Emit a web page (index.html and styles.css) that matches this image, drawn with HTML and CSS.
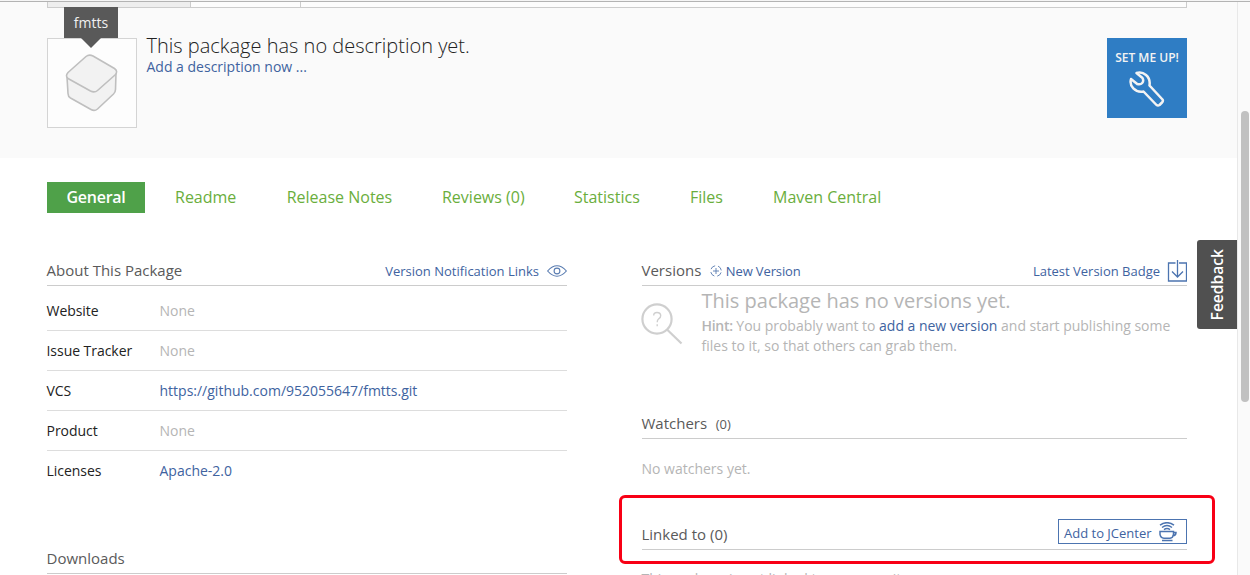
FILE: index.html
```html
<!DOCTYPE html>
<html lang="en">
<head>
<meta charset="utf-8">
<title>fmtts</title>
<link rel="stylesheet" href="styles.css">
</head>
<body>
<div class="window">
  <div class="page">
    <header class="hero">
      <div class="strip"><div class="strip-active"></div><div class="strip-second"></div><div class="strip-rest"></div></div>
      <div class="summary">
        <div class="avatar">
          <svg width="88" height="88" viewBox="0.5 0 88 88" fill="#f2f2f2" stroke="#bfbfbf" stroke-width="1.6" stroke-linejoin="round">
            <path d="M19.500 38L20.500 54.500Q20.500 57.500 23 59L43.500 70.500Q47 72.500 50 70L66 55Q68 53 68 50.500L68.500 34"/>
            <path d="M38.500 17.500Q41.500 15 45.500 17L67 29.500Q71 32.500 67.500 36L50 51.500Q47 54 43 52L20.500 39.500Q17.500 37 20.500 33.500Z"/>
          </svg>
          <div class="tooltip">fmtts</div>
        </div>
        <div class="description">
          <h1 class="title">This package has no description yet.</h1>
          <a class="describe">Add a description now ...</a>
        </div>
        <a class="setup"><span class="setup-label">SET ME UP!</span>
          <svg width="36" height="36" viewBox="0 0 36 36" fill="none" stroke="#f3f3f3" stroke-width="2.500" stroke-linejoin="round" stroke-linecap="round"><path d="M7.500 2C14 0 22 5 20.500 14.500L33.500 28.500Q34.500 30 33 31.500L30.500 34Q29 35 27.500 34L14.500 20.500C6 22 0 15 2 8L8.200 13Q11.500 14 13.200 12Q15 10 13.500 7Z"/></svg>
        </a>
      </div>
    </header>
    <nav class="tabs">
      <a class="tab active">General</a><a class="tab readme">Readme</a><a class="tab notes">Release Notes</a><a class="tab reviews">Reviews (0)</a><a class="tab stats">Statistics</a><a class="tab files">Files</a><a class="tab maven">Maven Central</a>
    </nav>
    <main class="columns">
      <div class="left">
        <section class="about">
          <div class="heading"><h2 class="name about-name">About This Package</h2><a class="action"><span class="links-label">Version Notification Links</span>
            <svg class="eye" width="20" height="12" viewBox="0 0 20 12" fill="none" stroke="#587bb0" stroke-width="1.100"><path d="M.6 6Q10-4.500 19.400 6Q10 16.500.6 6Z"/><circle cx="10" cy="6" r="2.900"/></svg></a></div>
          <dl class="facts">
            <div class="fact"><dt class="key">Website</dt><dd class="value">None</dd></div>
            <div class="fact"><dt class="key">Issue Tracker</dt><dd class="value">None</dd></div>
            <div class="fact"><dt class="key">VCS</dt><dd class="value link">https://github.com/952055647/fmtts.git</dd></div>
            <div class="fact"><dt class="key">Product</dt><dd class="value">None</dd></div>
            <div class="fact"><dt class="key">Licenses</dt><dd class="value link">Apache-2.0</dd></div>
          </dl>
        </section>
        <section><div class="heading"><h2 class="name downloads-name">Downloads</h2></div></section>
      </div>
      <div class="right">
        <section class="versions">
          <div class="heading"><h2 class="name versions-name">Versions</h2>
            <a class="new-version"><svg width="12" height="12" viewBox="0 0 12 12" fill="none" stroke="#587bb0" stroke-width=".9"><circle cx="6" cy="6" r="5.300" stroke-dasharray="5.300 3.025" stroke-dashoffset="-1.500"/><path d="M6 3v6M3 6h6"/></svg><span class="new-label">New Version</span></a>
            <a class="action"><span class="badge-label">Latest Version Badge</span>
            <svg class="download" width="20" height="22" viewBox="0 0 20 22" fill="none" stroke="#4c74b0" stroke-width="1.300"><path d="M8.500 3H1.500v18h18V3h-7.500M10.500 0v17M5 11.500L10.500 17l5.500-5.500"/></svg></a></div>
          <div class="empty">
            <svg class="lens" width="42" height="42" viewBox="0 0 42 42" fill="none" stroke="#cfcfcf" stroke-width="2.200"><circle cx="16" cy="16" r="14.600"/><path d="M26 26.500L40.500 40.500"/><path d="M12.700 12.500Q12.700 9.500 16 9.500Q19.700 9.500 19.700 12.700Q19.700 14.500 17.700 15.800Q16.200 17 16.200 19.200M16.200 21.300v2" stroke-width="1.400"/></svg>
            <div><h3 class="empty-title">This package has no versions yet.</h3>
            <p class="hint"><span class="hint-one"><b class="hint-mark">Hint:</b> You probably want to <a class="link">add a new version</a> and start publishing some</span><br><span class="hint-two">files to it, so that others can grab them.</span></p></div>
          </div>
        </section>
        <section class="watchers">
          <div class="heading"><h2 class="name watchers-name">Watchers</h2><span class="count">(0)</span></div>
          <p class="none">No watchers yet.</p>
        </section>
        <section>
          <div class="heading linked"><h2 class="name linked-name">Linked to (0)</h2><a class="jcenter"><span class="jcenter-label">Add to JCenter</span>
            <svg width="19" height="20" viewBox="0 0 19 20" fill="none" stroke="#4c74b0" stroke-width="1.500"><path d="M1 3.200Q8-1.800 15 3.200M3 5.500Q8 1.700 13 5.500M5 7.700Q8 5.300 11 7.700"/><path d="M1 9.500h13.500v2.800Q14 15.800 11 16.200H5Q1.500 15.800 1 12.300ZM14.500 10.500h2.500Q17 13.500 13.700 14M3 18.400h10.500"/></svg></a></div>
          <p class="none note">This package is not linked to any repository.</p>
        </section>
      </div>
    </main>
  </div>
  <div class="scrollbar"><div class="thumb"></div></div>
  <div class="highlight"></div>
  <div class="feedback"><span class="feedback-label">Feedback</span></div>
</div>
</body>
</html>
```
FILE: styles.css
```css
* { box-sizing: border-box; }
body { margin: 0; font-family: "Open Sans", sans-serif; font-size: 14px; line-height: 20px; color: #333; background: #fff; }
h1, h2, h3, p, dl, dd { margin: 0; font-weight: 400; }
a { text-decoration: none; white-space: nowrap; }
svg { display: block; flex: none; }
.window { position: relative; display: flex; width: 1250px; height: 575px; padding-top: 2px; overflow: hidden; background: linear-gradient(#f5f5f5 1px, #b3b3b3 1px, #b3b3b3 2px, #fff 2px); }
.page { width: 1237px; height: 573px; overflow: hidden; }
.hero { height: 156px; padding: 0 50px 0 47px; background: #fafafa; }
.strip { display: flex; height: 6px; border: 1px solid #ccc; border-top: 0; background: #fcfcfc; }
.strip-active { width: 143px; background: #eee; border-right: 1px solid #ccc; }
.strip-second { width: 110px; border-right: 1px solid #ccc; }
.summary { display: flex; align-items: flex-start; padding-top: 30px; }
.avatar { position: relative; width: 90px; height: 90px; border: 1px solid #d4d4d4; background: #fdfdfd; }
.tooltip { position: absolute; left: 16px; top: -32px; width: 54px; height: 31px; line-height: 31px; text-align: center; background: #595959; color: #f0f0f0; }
.tooltip::after { content: ""; position: absolute; left: 17px; top: 31px; border: 10px solid transparent; border-top-color: #595959; border-bottom: 0; }
.description { flex: 1; padding-left: 9.5px; }
.title { margin-bottom: 2px; font-size: 20px; font-weight: 300; line-height: 16px; color: #222; }
.describe { display: block; line-height: 22px; }
.describe, .link, .action, .new-version { color: #40639f; }
.setup { display: flex; flex-direction: column; align-items: center; width: 80px; height: 80px; padding-top: 10px; background: #2f7dc4; color: #f3f3f3; }
.setup-label { font-size: 12px; font-weight: 600; line-height: 20px; }
.setup svg { margin-top: 3px; }
.tabs { display: flex; margin: 24px 0 0 47px; height: 31px; line-height: 31px; font-size: 16px; color: #6aae3c; }
.tab.active { width: 98px; margin-right: 30px; text-align: center; background: #4fa149; color: #fff; font-weight: 600; letter-spacing: -0.25px; }
.readme { width: 111.7px; }
.notes { width: 155.300px; }
.reviews { width: 132px; }
.stats { width: 116px; }
.files { width: 83px; }
.columns { display: grid; grid-template-columns: 520px 545.5px; column-gap: 74.5px; margin: 43px 0 0 47px; }
.heading { display: flex; align-items: center; height: 30px; border-bottom: 1px solid #ccc; }
.name { padding-bottom: 2px; font-size: 15px; line-height: 20px; color: #5a5a5a; }
.about-name, .downloads-name, .key { text-indent: -0.5px; }
.action { display: flex; align-items: center; margin-left: auto; font-size: 13px; }
.eye { margin-left: 8px; }
.about { height: 288px; }
.fact { display: flex; align-items: center; height: 40px; border-bottom: 1px solid #ddd; }
.fact:first-child { height: 45px; padding-top: 5px; }
.fact:last-child { border-bottom: 0; }
.key { width: 112.5px; color: #222; letter-spacing: -0.04px; }
.value { color: #b5b5b5; }
.value.link { color: #40639f; }
.versions { height: 153px; }
.new-version { display: flex; align-items: center; gap: 3.5px; margin-left: 9px; font-size: 13px; letter-spacing: -0.12px; }
.download { margin-left: 7px; }
.empty { display: flex; color: #b5b5b5; }
.lens { margin: 17px 19px 0 -1px; }
.empty-title { padding-top: 5px; font-size: 20px; line-height: 20px; }
.hint { padding-top: 5px; white-space: nowrap; }
.hint-mark { font-weight: 600; letter-spacing: -0.3px; }
.hint-one { letter-spacing: -0.02px; }
.watchers { height: 110px; }
.count { margin-left: 8.5px; font-size: 13px; color: #5a5a5a; }
.none { padding-top: 20px; color: #b5b5b5; }
.note { padding-top: 19px; }
.linked { height: 31px; }
.linked-name { padding-bottom: 0; }
.jcenter { display: flex; align-items: center; align-self: flex-start; gap: 7px; width: 129px; height: 25px; margin-left: auto; padding-left: 5px; border: 1px solid #4c74b0; font-size: 13px; color: #40639f; }
.jcenter-label { padding-top: 3px; }
.scrollbar { width: 13px; padding: 109px 0 0 3px; border-left: 1px solid #e8e8e8; background: #fafafa; }
.thumb { width: 8px; height: 291px; border-radius: 4px; background: #c1c1c1; }
.highlight { position: absolute; left: 619px; top: 495px; width: 596px; height: 69px; border: 3px solid #f80015; border-radius: 6px; }
.feedback { position: absolute; left: 1197px; top: 240px; width: 40px; height: 89px; display: flex; align-items: center; justify-content: center; background: #505050; border-radius: 3px 0 0 3px; color: #fff; }
.feedback-label { writing-mode: vertical-rl; transform: rotate(180deg); font-size: 15.6px; font-weight: 600; }
```
